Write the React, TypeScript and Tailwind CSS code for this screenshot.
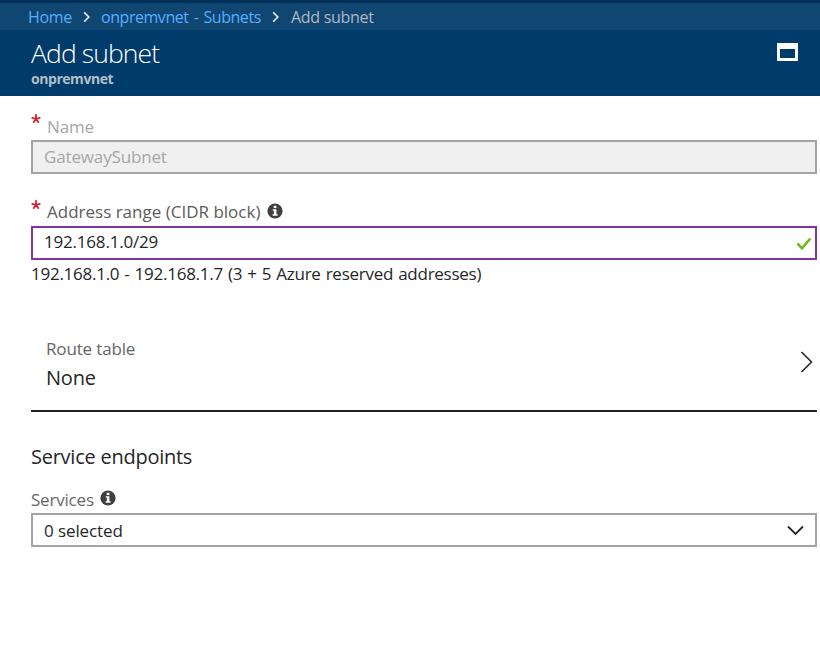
import React from "react";

function Info({ className = "" }: { className?: string }) {
  return (
    <svg width="16" height="16" viewBox="0 0 16 16" className={className}>
      <circle cx="8" cy="8" r="7.6" fill="#404040" />
      <rect x="6.7" y="2.8" width="2.7" height="2.3" fill="#fff" />
      <path d="M5.7 6.2H9.4V11.2H10.6V12.7H5.6V11.2H6.8V7.6H5.7Z" fill="#fff" />
    </svg>
  );
}

function Separator({ className = "" }: { className?: string }) {
  return (
    <svg width="8" height="12" viewBox="0 0 8 12" fill="none" stroke="#e8eef3" strokeWidth="1.6" className={className}>
      <path d="M1.2 1.4L5.8 6L1.2 10.6" />
    </svg>
  );
}

function Required() {
  return (
    <svg width="10" height="10" viewBox="0 0 10 10" stroke="#d8202e" strokeWidth="1.8" className="-mt-px shrink-0">
      <path d="M5 5V0.3M5 5L0.6 3.6M5 5L9.4 3.6M5 5L2.3 8.8M5 5L7.7 8.8" />
    </svg>
  );
}

export default function App() {
  return (
    <div className="h-[659px] w-[820px] overflow-hidden bg-white font-['Open_Sans','Noto_Sans',sans-serif] text-[17px] whitespace-nowrap text-[#262626]">
      <nav className="flex h-[30px] items-center border-t-3 border-[#002f59] bg-[#0f4672] pl-7 text-[16px] leading-[27px] tracking-[-0.3px]">
        <a className="w-[44px] pt-px text-[#55aeff]">Home</a>
        <Separator className="ml-[11px]" />
        <a className="ml-[10px] w-[160px] pt-px tracking-[-0.45px] text-[#55aeff] [word-spacing:1.4px]">onpremvnet - Subnets</a>
        <Separator className="ml-[11px]" />
        <span className="ml-[11px] pt-px text-[#b3b9c1]">Add subnet</span>
      </nav>
      <header className="flex h-[66px] justify-between bg-[#003c6b] pr-[22px] pl-[31px]">
        <div>
          <h1 className="pt-[5px] text-[26.5px] leading-[36px] font-light tracking-[-0.9px] text-white">Add subnet</h1>
          <p className="text-[14px] leading-[16px] font-bold tracking-[-0.45px] text-[#b3bfca]">onpremvnet</p>
        </div>
        <div className="mt-[13px] h-[18px] w-[21px] border-3 border-t-6 border-white" />
      </header>

      <main className="pr-[3px] pl-[31px]">
        <div className="flex h-[44px] pt-[19px]">
          <Required />
          <label className="ml-[6px] leading-[23px] tracking-[-0.15px] text-[#a6a6a6]">Name</label>
        </div>
        <div className="h-[34px] border-2 border-[#a3a3a3] bg-[#f0f0f0] pl-[11px] leading-[29px] tracking-[-0.15px] text-[#a6a6a6]">
          GatewaySubnet
        </div>

        <div className="flex h-[52px] pt-[27px]">
          <Required />
          <label className="ml-[6px] w-[213px] leading-[22px] text-[#5c5c5c]">Address range (CIDR block)</label>
          <Info className="ml-[7px] mt-[2px]" />
        </div>
        <div className="flex h-[34px] items-center justify-between border-2 border-[#80379b] pr-[3px] pl-[11px]">
          <span className="pb-[2px] leading-[28px] tracking-[-0.2px]">192.168.1.0/29</span>
          <svg width="16" height="14" viewBox="0 0 16 14" fill="none" stroke="#77b61c" strokeWidth="2.6" className="mt-[2px]">
            <path d="M1.5 6.5L6 11.3L14.3 1.5" />
          </svg>
        </div>
        <p className="h-[63px] leading-[27px] tracking-[-0.26px] [word-spacing:0.9px]">192.168.1.0 - 192.168.1.7 (3 + 5 Azure reserved addresses)</p>

        <div className="flex h-[89px] justify-between border-b-2 border-[#222] pr-[4px] pl-[15px]">
          <div>
            <p className="mt-[13px] leading-[26px] tracking-[-0.15px] text-[#666]">Route table</p>
            <p className="text-[20px] leading-[32px] tracking-[-0.2px]">None</p>
          </div>
          <svg width="13" height="22" viewBox="0 0 13 22" fill="none" stroke="#262626" strokeWidth="1.6" className="mt-[28px]">
            <path d="M1.5 1L11.5 11L1.5 21" />
          </svg>
        </div>

        <h2 className="mt-[30px] text-[20px] leading-[30px] tracking-[-0.25px]">Service endpoints</h2>
        <div className="mt-[14px] flex h-[27px]">
          <label className="w-[62px] leading-[27px] tracking-[-0.2px] text-[#666]">Services</label>
          <Info className="ml-[7px] mt-[4px]" />
        </div>
        <div className="flex h-[34px] items-center justify-between border-2 border-[#a3a3a3] pr-[11px] pl-[11px]">
          <span className="pt-[2px] leading-[28px] tracking-[-0.1px]">0 selected</span>
          <svg width="17" height="11" viewBox="0 0 17 11" fill="none" stroke="#262626" strokeWidth="1.8" className="mt-px">
            <path d="M1 1.5L8.5 9L16 1.5" />
          </svg>
        </div>
      </main>
    </div>
  );
}
